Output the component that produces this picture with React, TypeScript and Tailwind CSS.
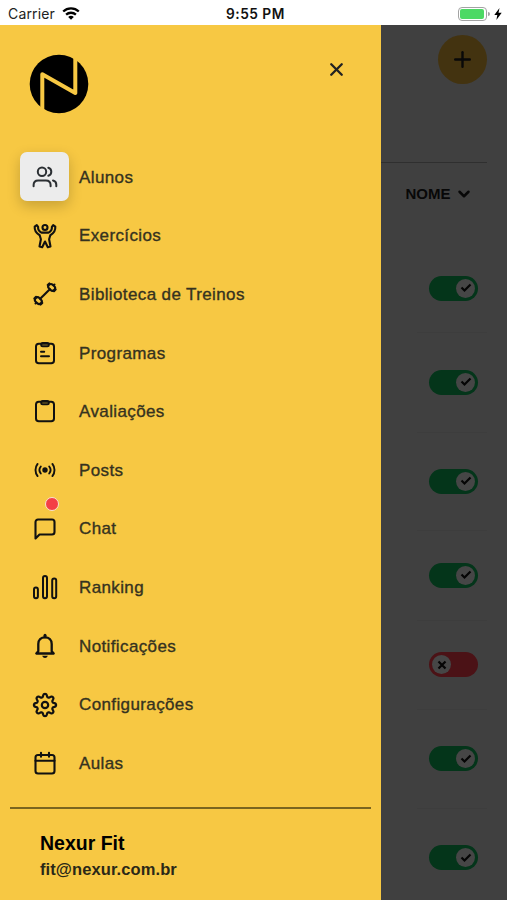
import type { ReactNode } from 'react'
import { ChevronDown, Plus, X } from 'lucide-react'

const UsersIcon = () => (
  <svg viewBox="0 0 26 22" className="w-[26px] h-[22px]" fill="none" stroke="#2b2f33" strokeWidth="2" strokeLinecap="round">
    <circle cx="10" cy="5.8" r="4.2" />
    <path d="M1.600 20.300v-1.200c0-3 1.800-4.700 4.500-4.700h7.800c2.700 0 4.700 1.700 4.700 4.700v1.200" />
    <path d="M16.300 1.800c2 .5 3 2.100 3 4s-1 3.500-3 4M21 14.500c2.200.5 3.300 2 3.300 4.200v1.600" />
  </svg>
)

const ExerciseIcon = () => (
  <svg viewBox="0 0 24 26" className="w-6 h-[26px]" fill="none" stroke="#111" strokeWidth="2.100" strokeLinejoin="round" strokeLinecap="round">
    <circle cx="12" cy="4.500" r="2.500" />
    <path d="M3.800 2.200 1.700 3.700c-.3 3.500.9 6.300 5 8.500l1.200 4-1.400 7.300 2.700.7L12 18.500l2.800 5.700 2.700-.7-1.400-7.300 1.200-4c4.100-2.200 5.300-5 5-8.500l-2.100-1.500-1.300 1.700c.2 2.500-.8 4.400-3.300 5.700H8.400C5.900 8.300 4.900 6.400 5.100 3.900z" />
  </svg>
)

const DumbbellIcon = () => (
  <svg viewBox="0 0 24 24" className="w-6 h-6" fill="none" stroke="#111" strokeWidth="2.100" strokeLinecap="round">
    <g transform="rotate(45 12 12)">
      <path d="M12 5.200v13.600" />
      <rect x="8.400" y="0" width="7.200" height="5.200" rx="2.400" />
      <path d="M12-1.300v.8M7.600 1.400v2.300M16.400 1.400v2.300" />
      <rect x="8.400" y="18.800" width="7.200" height="5.200" rx="2.400" />
      <path d="M12 24.500v.8M7.600 20.300v2.300M16.400 20.300v2.300" />
    </g>
  </svg>
)

const ClipboardIcon = ({ lines }: { lines?: boolean }) => (
  <svg viewBox="0 0 22 24" className="w-[22px] h-6" fill="none" stroke="#111" strokeWidth="2" strokeLinecap="round" strokeLinejoin="round">
    <rect x="2" y="2.800" width="18" height="19.400" rx="2.800" />
    <rect x="7.200" y="2" width="7.600" height="3.200" rx="1.500" />
    {lines && <path d="M7 10.700h3.200M7 15.300h8" />}
  </svg>
)

const PostsIcon = () => (
  <svg viewBox="0 0 22 18" className="w-[22px] h-[18px]" fill="none" stroke="#111" strokeWidth="1.900" strokeLinecap="round">
    <circle cx="11" cy="9" r="2.700" fill="#111" stroke="none" />
    <path d="M6.800 5.500c-1.700 2.100-1.700 4.900 0 7M15.200 5.500c1.700 2.100 1.700 4.900 0 7M3.600 2.900c-2.800 3.500-2.800 8.700 0 12.200M18.400 2.900c2.800 3.500 2.800 8.700 0 12.200" />
  </svg>
)

const ChatIcon = () => (
  <svg viewBox="0 0 22 22" className="w-[22px] h-[22px]" fill="none" stroke="#111" strokeWidth="2.100" strokeLinejoin="round">
    <path d="M1.500 20.500V4a2.500 2.500 0 0 1 2.500-2.500h14A2.500 2.500 0 0 1 20.500 4v10a2.500 2.500 0 0 1-2.500 2.500H5.500z" />
  </svg>
)

const RankingIcon = () => (
  <svg viewBox="0 0 26 26" className="w-[26px] h-[26px]" fill="none" stroke="#111" strokeWidth="2">
    <rect x="2" y="13.500" width="3.900" height="10.700" rx="1.900" />
    <rect x="11" y="1.900" width="4" height="22.300" rx="2" />
    <rect x="20.200" y="4.600" width="4" height="19.600" rx="2" />
  </svg>
)

const BellIcon = () => (
  <svg viewBox="0 0 22 26" className="w-[22px] h-[26px]" fill="none" stroke="#111" strokeWidth="2.300" strokeLinecap="round" strokeLinejoin="round">
    <path d="M2.300 20.500h17.400l-2-2.300V11c0-4-2.700-6.700-6.700-6.700S4.300 7 4.300 11v7.200z" />
    <path d="M11 2.200v1.500" strokeWidth="3" />
    <path d="M8.200 22.800h5.600c-.6 1.500-1.600 2.200-2.800 2.200s-2.200-.7-2.800-2.200z" fill="#111" stroke="none" />
  </svg>
)

// eight rounded teeth around the hub
const gearPoints = Array.from({ length: 96 }, (_, i) => {
  const a = (i / 96) * Math.PI * 2
  const r = 9.6 + 1.6 * Math.tanh(1.6 * Math.cos(8 * a))
  return `${(13 + r * Math.sin(a)).toFixed(2)},${(13 - r * Math.cos(a)).toFixed(2)}`
}).join(' ')

const GearIcon = () => (
  <svg viewBox="0 0 26 26" className="w-[26px] h-[26px]" fill="none" stroke="#111" strokeWidth="2.200" strokeLinejoin="round">
    <polygon points={gearPoints} />
    <circle cx="13" cy="13" r="3.200" />
  </svg>
)

const CalendarIcon = () => (
  <svg viewBox="0 0 22 24" className="w-[22px] h-6" fill="none" stroke="#111" strokeWidth="2.100" strokeLinecap="round" strokeLinejoin="round">
    <rect x="1.500" y="4" width="19" height="18.500" rx="2.500" />
    <path d="M1.500 9.800h19M7 1.800v4M15 1.800v4" />
  </svg>
)

const menu: { label: string; icon: ReactNode; active?: boolean; badge?: boolean }[] = [
  { label: 'Alunos', icon: <UsersIcon />, active: true },
  { label: 'Exercícios', icon: <ExerciseIcon /> },
  { label: 'Biblioteca de Treinos', icon: <DumbbellIcon /> },
  { label: 'Programas', icon: <ClipboardIcon lines /> },
  { label: 'Avaliações', icon: <ClipboardIcon /> },
  { label: 'Posts', icon: <PostsIcon /> },
  { label: 'Chat', icon: <ChatIcon />, badge: true },
  { label: 'Ranking', icon: <RankingIcon /> },
  { label: 'Notificações', icon: <BellIcon /> },
  { label: 'Configurações', icon: <GearIcon /> },
  { label: 'Aulas', icon: <CalendarIcon /> },
]

const students = [
  { height: 88, on: true },
  { height: 100, on: true },
  { height: 98, on: true },
  { height: 90, on: true },
  { height: 89, on: false },
  { height: 99, on: true },
  { height: 99, on: true },
]

function StatusBar() {
  return (
    <header className="relative h-[25px] shrink-0 bg-white flex items-center justify-between pl-2 pr-[5px] pt-0.5 text-black font-['Inter',sans-serif]">
      <div className="flex items-center gap-[7px]">
        <span className="text-[14px] tracking-[0.150px] text-[#222]">Carrier</span>
        <svg viewBox="0 0 18 13" className="w-[18px] h-[13px]" fill="none" stroke="#000" strokeWidth="2.300">
          <path d="M1.200 4.500c4.400-4.200 11.200-4.200 15.600 0M4.100 7.700c2.800-2.600 7-2.600 9.800 0" />
          <path d="M6.200 9.900c1.600-1.400 4-1.400 5.600 0L9 12.800z" fill="#000" stroke="none" />
        </svg>
      </div>
      <span className="absolute left-[226px] text-[14px] font-semibold tracking-[0.500px] text-[#111] origin-left scale-x-[0.980]">9:55 PM</span>
      <div className="flex items-center">
        <div className="w-[29px] h-[14px] rounded-[4px] border border-[#a3a3a3] p-px">
          <div className="h-full w-[24px] rounded-[2px] bg-[#4cd964]" />
        </div>
        <div className="w-[2px] h-[4px] rounded-r-full bg-[#a3a3a3] ml-px" />
        <svg viewBox="0 0 8 12" className="w-[8px] h-[12px] ml-1">
          <path d="M5.500 0 .3 6.900h3L2.400 12l5.300-7.200H4.500z" />
        </svg>
      </div>
    </header>
  )
}

function Logo() {
  return (
    <svg viewBox="0 0 60 60" className="w-[60px] h-[60px]">
      <circle cx="30" cy="30" r="29.300" />
      <path d="M13.300 60V20.300L46.300 39V0" fill="none" stroke="#f7c843" strokeWidth="4" strokeLinejoin="round" />
    </svg>
  )
}

function Toggle({ on }: { on: boolean }) {
  return (
    <div className={`w-[49px] h-[25px] rounded-full flex items-center p-[3px] ${on ? 'bg-[#04351a] justify-end' : 'bg-[#4b1216] justify-start'}`}>
      <div className="size-[19px] rounded-full bg-[#464646] flex items-center justify-center">
        <svg viewBox="0 0 12 12" className="size-3" fill="none" stroke="#050505" strokeWidth="2.200">
          <path d={on ? 'm1.500 5.500 3 3 6-6' : 'm2.500 2.500 7 7m0-7-7 7'} />
        </svg>
      </div>
    </div>
  )
}

export default function App() {
  return (
    <div className="w-[507px] h-[900px] overflow-hidden flex flex-col font-['Liberation_Sans',Arial,sans-serif]">
      <StatusBar />
      <div className="flex flex-1 min-h-0">
        {/* Drawer */}
        <aside className="w-[381px] shrink-0 bg-[#f7c843] flex flex-col">
          <div className="h-[122.600px] shrink-0 flex justify-between items-start pl-[29px] pr-[34px] pt-[29px]">
            <Logo />
            <X size={21} strokeWidth={2.700} color="#222" className="mt-[5px]" />
          </div>

          <nav>
            {menu.map(item => (
              <a key={item.label} className="h-[58.640px] pl-5 flex items-center gap-[10px]">
                <span className={`relative size-[49px] rounded-[7px] flex items-center justify-center ${item.active ? 'bg-[#ececec] shadow-[0_5px_14px_rgba(0,0,0,0.200)]' : ''}`}>
                  {item.icon}
                  {item.badge && <span className="absolute left-[25px] -top-[7px] size-[14px] rounded-full border border-[#f8e3d0] bg-[#f43f46]" />}
                </span>
                <span className="pt-px text-[17px] tracking-[0.380px] text-[#35321f] [-webkit-text-stroke:0.350px_#35321f]">{item.label}</span>
              </a>
            ))}
          </nav>

          <div className="mx-[10px] mt-[14.400px] border-t-2 border-[#7b651f]" />
          <div className="pl-10 pt-[21px] font-bold">
            <p className="text-[19.500px] leading-[26px] text-black">Nexur Fit</p>
            <p className="text-[16.500px] leading-[26px] tracking-[0.100px] text-[#2b2817]">fit@nexur.com.br</p>
          </div>
        </aside>

        {/* Dimmed student list */}
        <main className="flex-1 bg-[#404040] pr-5 flex flex-col">
          <div className="h-[138px] shrink-0 border-b border-[#2f2f2f] pt-[10px] flex justify-end items-start">
            <div className="size-[49px] rounded-full bg-[#433310] flex items-center justify-center">
              <Plus size={25} strokeWidth={2.300} color="#090909" />
            </div>
          </div>
          <div className="h-[81.500px] shrink-0 pt-[20px] pr-[14px] flex justify-end items-start gap-[4.500px] text-[#080808]">
            <span className="text-[15px] leading-[22px] font-bold">NOME</span>
            <ChevronDown size={18} strokeWidth={3.300} className="mt-0.5" />
          </div>
          {students.map((student, i) => (
            <div key={i} className="ml-9 shrink-0 border-b border-[#3d3d3d] flex items-center justify-end pr-[9px]" style={{ height: student.height }}>
              <Toggle on={student.on} />
            </div>
          ))}
        </main>
      </div>
    </div>
  )
}
